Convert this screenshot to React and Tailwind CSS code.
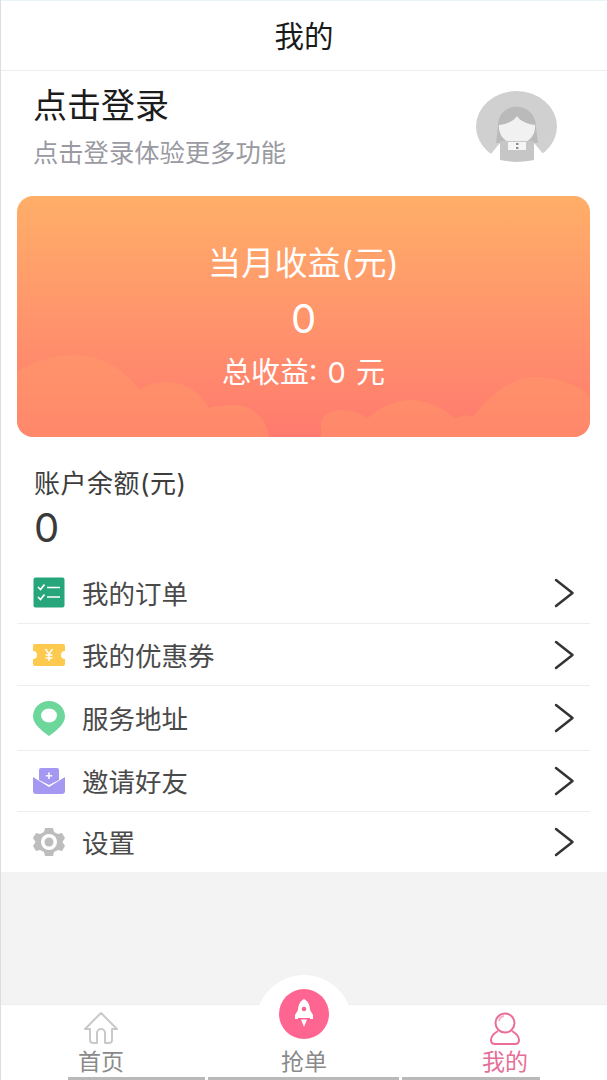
const font = { fontFamily: 'Inter, "Noto Sans CJK SC", "Noto Sans", sans-serif' };

function Chevron() {
  return (
    <svg width="24" height="32" viewBox="0 0 24 32" fill="none" stroke="#333" strokeWidth="2.500" strokeLinecap="round" strokeLinejoin="round">
      <path d="M4 3 L20.500 16 L4 29" />
    </svg>
  );
}

function OrderIcon() {
  return (
    <svg width="32" height="31" viewBox="0 0 32 31">
      <rect width="31" height="30" x="0.500" y="0.500" rx="2" fill="#27a67c" />
      <path d="M5 10 L7.500 12.500 L11.500 7.500 M5 20 L7.500 22.500 L11.500 17.500" fill="none" stroke="#fff" strokeWidth="1.700" />
      <path d="M14 10.500 H27 M14 20 H27" stroke="#fff" strokeWidth="1.700" />
    </svg>
  );
}

function CouponIcon() {
  return (
    <svg width="32" height="22" viewBox="0 0 32 22">
      <path d="M2 0 H30 a2 2 0 0 1 2 2 V7 a4 4 0 0 0 0 8 V20 a2 2 0 0 1 -2 2 H2 a2 2 0 0 1 -2 -2 V15 a4 4 0 0 0 0 -8 V2 a2 2 0 0 1 2 -2 Z" fill="#fdc94f" />
      <path d="M12.500 5 L16 10 L19.500 5 M16 10 V17 M12.500 11 H19.500 M12.500 14 H19.500" fill="none" stroke="#fff" strokeWidth="1.400" />
    </svg>
  );
}

function PinIcon() {
  return (
    <svg width="32" height="35" viewBox="0 0 32 35">
      <path d="M16 0 C7 0 0 7 0 15.500 C0 23 9 30 16 35 C23 30 32 23 32 15.500 C32 7 25 0 16 0 Z" fill="#6cd69b" />
      <ellipse cx="16" cy="14.500" rx="8" ry="7" fill="#fff" />
    </svg>
  );
}

function MailIcon() {
  return (
    <svg width="32" height="26" viewBox="0 0 32 26">
      <path d="M6 2 a2 2 0 0 1 2 -2 H24 a2 2 0 0 1 2 2 V12 L16 17 L6 12 Z" fill="#a498f3" />
      <path d="M0 9 L16 19 L32 9 V23 a3 3 0 0 1 -3 3 H3 a3 3 0 0 1 -3 -3 Z" fill="#a498f3" />
      <path d="M16 4.500 V11 M12.800 7.800 H19.200" stroke="#fff" strokeWidth="1.500" />
    </svg>
  );
}

function GearIcon() {
  return (
    <svg width="32" height="28" viewBox="0 0 32 28">
      <path
        fill="#bdbdbd"
        d="M12 0 H20 L21 4 L25 6 L29 5 L32 10 L29.500 14 L32 18 L29 23 L25 22 L21 24 L20 28 H12 L11 24 L7 22 L3 23 L0 18 L2.500 14 L0 10 L3 5 L7 6 L11 4 Z"
      />
      <circle cx="16" cy="14" r="8" fill="#fff" />
      <circle cx="16" cy="14" r="4.500" fill="#bdbdbd" />
    </svg>
  );
}

function Avatar() {
  return (
    <svg width="81" height="71" viewBox="0 0 81 71">
      <ellipse cx="40.500" cy="35.500" rx="40.500" ry="35.500" fill="#d0d0d0" />
      <path d="M14 64 L24 52 L24 71 L8 71 Z M68 64 L58 52 L58 71 L74 71 Z" fill="#fff" />
      <path d="M22 36 C21 9 60 9 60 36 L62 52 H20 Z" fill="#bababa" />
      <path d="M23 34 C31 33 38 30 41 25 C44 30 51 33 59 34 C60 45 52 53 41 53 C30 53 22 45 23 34 Z" fill="#f1f1f1" />
      <path d="M24 50 H58 V69 C47 71 35 71 24 69 Z" fill="#c6c6c6" />
      <path d="M32 51 H50 V59 H32 Z" fill="#f5f5f5" />
      <path d="M40 52 h2.500 v2 h-2.500 Z M40 56 h2.500 v2 h-2.500 Z" fill="#8f8f8f" />
    </svg>
  );
}

function Clouds() {
  return (
    <svg className="absolute inset-0 w-full h-full" viewBox="0 0 573 241" preserveAspectRatio="none">
      <g fill="#ffa066" fillOpacity="0.35">
        <path d="M0 176 C18 165 38 159 57 159 C85 159 107 174 123 194 C130 188 140 186 150 186 C170 186 184 198 192 212 C200 209 210 209 219 209 C238 210 250 224 252 241 H0 Z" />
        <path d="M304 241 V226 C306 218 315 214 324 214 C335 214 344 218 351 222 C362 212 378 204 394 204 C412 204 428 214 438 222 L448 219 L456 221 C466 208 476 197 487 191 C498 184 508 181 518 181 C538 181 558 188 568 196 L573 201 V241 Z" />
      </g>
    </svg>
  );
}

function Row({ icon, label, h, last }) {
  return (
    <div className={`flex items-center ml-4 mr-[17px] pl-4 ${h} ${last ? "" : "border-b border-[#eeeeee]"}`}>
      <div className="w-[32px] flex justify-center">{icon}</div>
      <span className="ml-[17px] pt-[3px] text-[26.500px] leading-none text-[#4a4a4a]">{label}</span>
      <div className="ml-auto mr-[14px] flex">
        <Chevron />
      </div>
    </div>
  );
}

export default function App() {
  const rows = [
    { label: "我的订单", icon: <OrderIcon />, h: "h-[62px]" },
    { label: "我的优惠券", icon: <CouponIcon />, h: "h-[62px]" },
    { label: "服务地址", icon: <PinIcon />, h: "h-[65px]" },
    { label: "邀请好友", icon: <MailIcon />, h: "h-[61px]" },
    { label: "设置", icon: <GearIcon />, h: "h-[60px]", last: true },
  ];

  return (
    <div style={font} className="relative w-[607px] h-[1080px] overflow-hidden bg-white border-l border-[#dddddd] flex flex-col">
      <header className="h-[71px] shrink-0 flex items-center justify-center pt-[2px] border-b border-[#eeeeee] border-t-[#e6f6f8] border-t">
        <span className="text-[29.500px] leading-none text-[#1a1a1a]">我的</span>
      </header>

      <div className="h-[125px] shrink-0 flex justify-between pl-[32px] pr-[50px]">
        <div>
          <div className="mt-[16px] text-[34px] leading-[38px] text-[#1c1c1c]">点击登录</div>
          <div className="mt-[13px] text-[25.300px] leading-[30px] text-[#9a9aa2]">点击登录体验更多功能</div>
        </div>
        <div className="mt-[20px]">
          <Avatar />
        </div>
      </div>

      <div className="relative ml-4 mr-[17px] h-[241px] shrink-0 rounded-[16px] overflow-hidden bg-gradient-to-b from-[#ffae68] to-[#ff7a6e]">
        <Clouds />
        <div className="relative flex flex-col items-center text-white">
          <div className="mt-[46px] text-[33px] leading-[42px] tracking-[0.300px]">当月收益(元)</div>
          <div className="mt-[13px] text-[40px] leading-[44px]">0</div>
          <div className="mt-[14px] text-[29px] leading-[36px] [word-spacing:2px]">总收益: 0 元</div>
        </div>
      </div>

      <div className="pl-[33px] h-[125px] shrink-0">
        <div className="mt-[31px] text-[26px] leading-[32px] tracking-[0.500px] text-[#3d3d3d]">账户余额(元)</div>
        <div className="mt-[6px] text-[40px] leading-[44px] text-[#3a3a3a]">0</div>
      </div>

      <div className="shrink-0">
        {rows.map((row) => (
          <Row key={row.label} {...row} />
        ))}
      </div>

      <div className="flex-1 bg-[#f3f3f3]" />

      <nav className="relative h-[76px] shrink-0 bg-white border-t border-[#eeeeee] grid grid-cols-3">
        <div className="flex flex-col items-center pt-[7px] pr-[2px]">
          <svg width="36" height="33" viewBox="0 0 36 33" fill="none" stroke="#c9c9c9" strokeWidth="2" strokeLinejoin="round">
            <path d="M18 1 L34 17 H29 V28 a3 3 0 0 1 -3 3 H22 V21 a4 4 0 0 0 -8 0 V31 H10 a3 3 0 0 1 -3 -3 V17 H2 Z" />
          </svg>
          <span className="mt-[3px] text-[23px] leading-[28px] text-[#8a8a8a]">首页</span>
        </div>
        <div className="flex flex-col items-center justify-end">
          <span className="mb-[4px] text-[23px] leading-[28px] text-[#8a8a8a]">抢单</span>
        </div>
        <div className="flex flex-col items-center pt-[7px] pr-[2px]">
          <svg width="32" height="33" viewBox="0 0 32 33" fill="none" stroke="#ec6d98" strokeWidth="2">
            <circle cx="16" cy="11" r="9.500" />
            <path d="M10 9 a6 6 0 0 1 5 -5" stroke="#f5b5c8" />
            <path d="M9 19 C4 22 2 26 2 28 C2 30.500 3.500 32 6 32 H26 C28.500 32 30 30.500 30 28 C30 26 28 22 23 19" />
          </svg>
          <span className="mt-[3px] text-[23px] leading-[28px] text-[#e56e97]">我的</span>
        </div>

        {/* raised centre button */}
        <div className="absolute left-[255px] top-[-30px] w-[96px] h-[70px] rounded-t-[48px] bg-white flex justify-center pt-[14px]">
          <div className="w-[50px] h-[50px] rounded-full bg-[#fe6590] flex items-center justify-center pb-[2px]">
            <svg width="18" height="28" viewBox="0 0 18 28" fill="#fff">
              <path d="M9 0 C13.500 2.500 15 7 15 11 V19 H3 V11 C3 7 4.500 2.500 9 0 Z" />
              <path d="M3 11 L0 16 V20 H3 Z M15 11 L18 16 V20 H15 Z" />
              <path d="M6 20.500 H12 L9 28 Z" />
              <circle cx="9" cy="10" r="2.300" fill="#fe6590" />
            </svg>
          </div>
        </div>

        {/* home indicator segments */}
        <div className="absolute left-[67px] bottom-0 w-[137px] h-[3px] bg-[#b9b9b9]" />
        <div className="absolute left-[207px] bottom-0 w-[191px] h-[3px] bg-[#b9b9b9]" />
        <div className="absolute left-[401px] bottom-0 w-[138px] h-[3px] bg-[#b9b9b9]" />
      </nav>
    </div>
  );
}
